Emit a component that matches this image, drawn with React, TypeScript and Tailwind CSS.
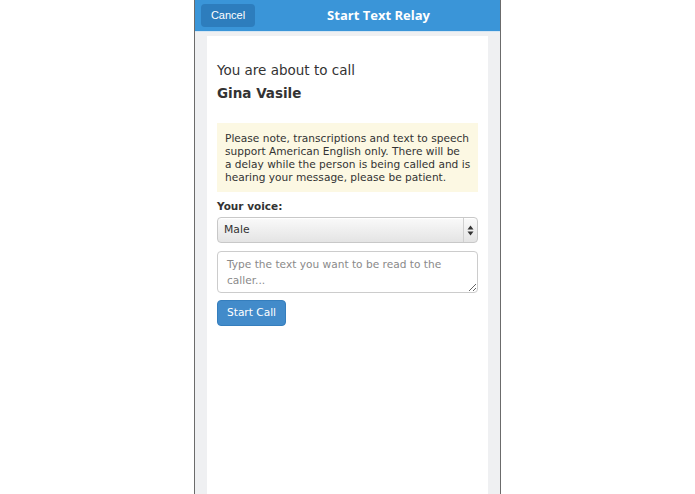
import { useState } from "react";

// Small up/down arrows drawn inside the native-looking select
function SelectArrows() {
  return (
    <svg width="7" height="11" viewBox="0 0 7 11" className="text-[#333]">
      <path d="M3.5 0.5 L6.5 4.5 L0.5 4.5 Z" fill="currentColor" />
      <path d="M3.5 10.5 L6.5 6.5 L0.5 6.5 Z" fill="currentColor" />
    </svg>
  );
}

export default function App() {
  const [voice, setVoice] = useState("Male");
  const [message, setMessage] = useState("");

  return (
    <div className="w-[695px] h-[494px] bg-white flex justify-center overflow-hidden [font-family:'DejaVu_Sans',sans-serif]">
      <div className="w-[307px] h-full flex flex-col border-l border-r border-[#6b6b6b] bg-[#eff0f2]">
        {/* Top bar */}
        <div className="h-[32px] bg-[#3a95d8] flex items-center pl-[6px] shrink-0 border-b border-[#d5e6f3]">
          <button className="h-[23px] w-[54px] rounded-[4px] bg-[#2d7dbd] text-white text-[11px] [font-family:'Liberation_Sans',sans-serif]">
            Cancel
          </button>
          <div className="flex-1 text-center text-white font-bold text-[13px] [font-family:'Open_Sans',sans-serif] pl-[2px]">
            Start Text Relay
          </div>
        </div>

        {/* Card */}
        <div className="flex-1 mx-[12px] mt-[4px] bg-white px-[10px] pt-[26px]">
          <div className="text-[13.5px] text-[#333] leading-[17px]">You are about to call</div>
          <div className="text-[13.5px] font-bold text-[#333] mt-[5px] leading-[19px]">Gina Vasile</div>

          <div className="mt-[20px] bg-[#fcf8e3] px-[8px] pt-[9px] pb-[8px] text-[10.6px] leading-[13px] text-[#333] whitespace-nowrap">
            Please note, transcriptions and text to speech
            <br />
            support American English only. There will be
            <br />
            a delay while the person is being called and is
            <br />
            hearing your message, please be patient.
          </div>

          <div className="mt-[7px] text-[10.5px] font-bold text-[#333] leading-[15px]">Your voice:</div>
          <div className="mt-[3px] h-[26px] rounded-[4px] border border-[#c8c8c8] flex items-center bg-[linear-gradient(#fafafa,#e4e4e4)] shadow-[inset_0_1px_0_#fff]">
            <select
              value={voice}
              onChange={(e) => setVoice(e.target.value)}
              className="flex-1 appearance-none bg-transparent pl-[6px] text-[10.8px] text-[#333] outline-none"
            >
              <option>Male</option>
              <option>Female</option>
            </select>
            <div className="w-[14px] h-full border-l border-[#d0d0d0] flex items-center justify-center">
              <SelectArrows />
            </div>
          </div>

          <textarea
            value={message}
            onChange={(e) => setMessage(e.target.value)}
            placeholder="Type the text you want to be read to the caller..."
            className="mt-[8px] w-full h-[42px] block resize-y rounded-[4px] border border-[#ccc] px-[9px] pt-[4px] text-[10.6px] leading-[16px] text-[#555] placeholder:text-[#8a8a8a] outline-none"
          />

          <button className="mt-[7px] h-[26px] px-[9px] rounded-[4px] bg-[#428bca] border border-[#357ebd] text-white text-[10.6px]">
            Start Call
          </button>
        </div>
      </div>
    </div>
  );
}
